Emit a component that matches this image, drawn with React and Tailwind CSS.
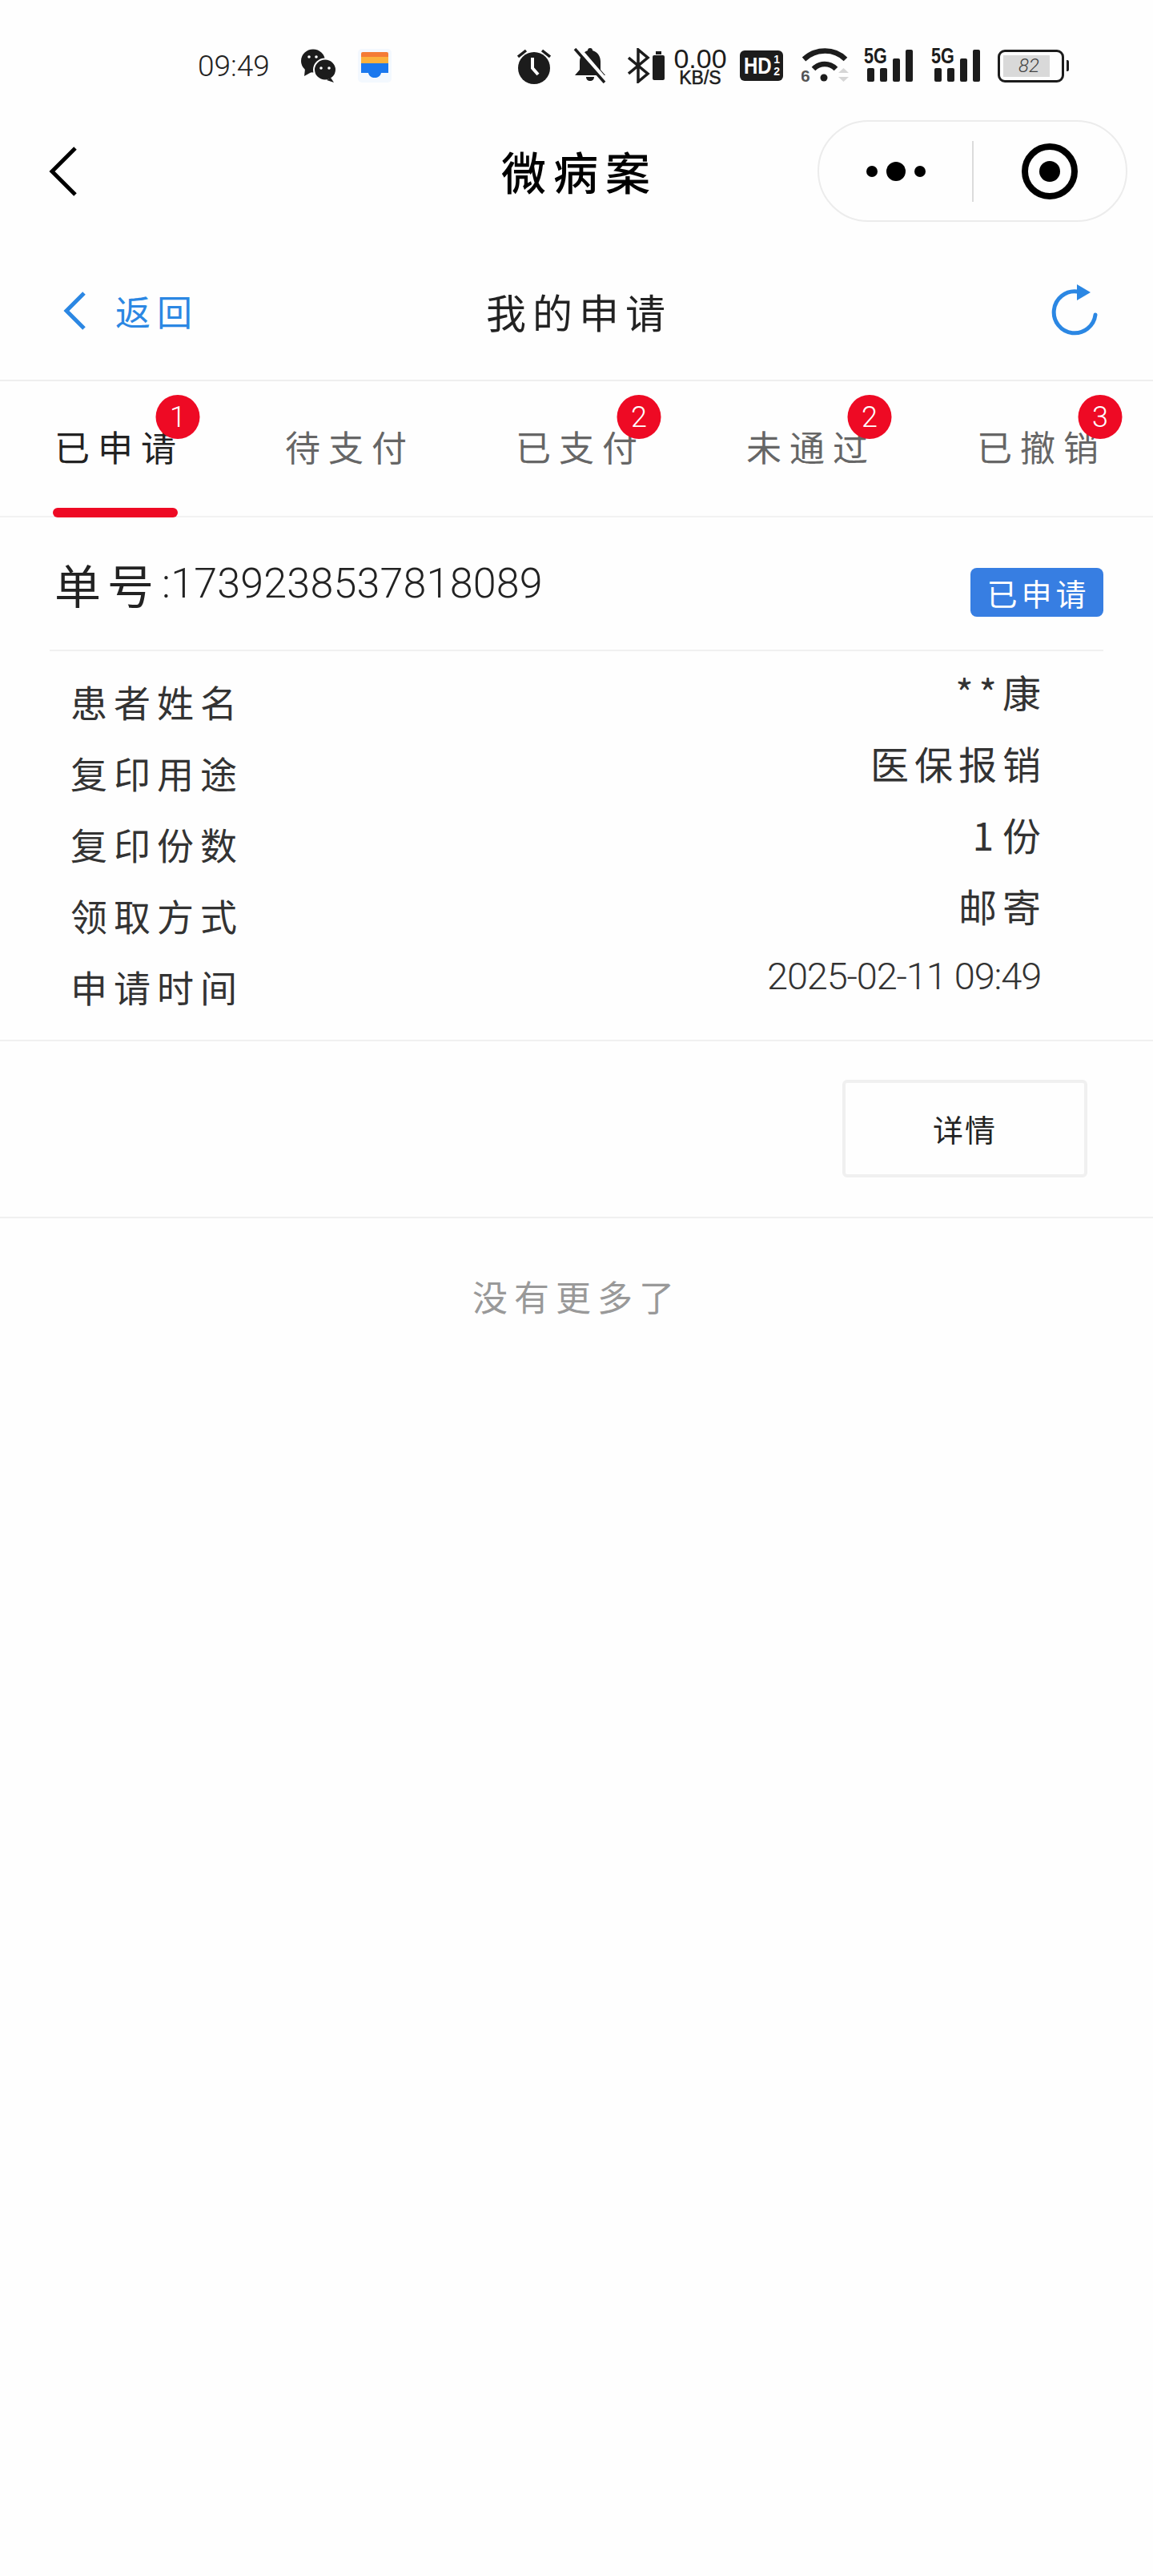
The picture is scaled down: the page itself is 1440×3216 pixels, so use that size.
import { Fragment } from "react";

const cjk = "font-['Noto_Sans_CJK_SC','Noto_Sans',sans-serif]";
const num = "font-['Roboto','Noto_Sans_CJK_SC',sans-serif] font-light";
const bold = "font-['Liberation_Sans',sans-serif] font-bold";

const tabs = [
  { label: "已申请", count: 1, active: true },
  { label: "待支付" },
  { label: "已支付", count: 2 },
  { label: "未通过", count: 2 },
  { label: "已撤销", count: 3 },
];

const rows = [
  ["患者姓名", "**康"],
  ["复印用途", "医保报销"],
  ["复印份数", "1 份"],
  ["领取方式", "邮寄"],
  ["申请时间", "2025-02-11 09:49"],
];

const Wechat = () => (
  <svg width="46" height="42" viewBox="0 0 46 42" fill="#1c1c1c">
    <ellipse cx="16" cy="15" rx="15" ry="14.5" />
    <path d="M6 25l-1 9 9-5z" />
    <ellipse cx="31" cy="26" rx="14" ry="13.5" stroke="#fff" strokeWidth="2" />
    <path d="M38 36l4 6-9-3z" />
    <circle cx="11" cy="10" r="1.8" fill="#fff" />
    <circle cx="20" cy="10" r="1.8" fill="#fff" />
    <circle cx="26" cy="24" r="1.8" fill="#fff" />
    <circle cx="36" cy="24" r="1.8" fill="#fff" />
  </svg>
);

const Wallet = () => (
  <svg width="42" height="42" viewBox="0 0 42 42">
    <rect x="0" y="0" width="42" height="42" rx="5" fill="#f3f8fe" />
    <path d="M4 6a2 2 0 0 1 2-2h30a2 2 0 0 1 2 2v4H4z" fill="#f47b35" />
    <rect x="4" y="10" width="34" height="8" fill="#fbb13c" />
    <path d="M4 18h34v12h-9c-1 4-4 6-8 6s-7-2-8-6H4z" fill="#1a78ee" />
  </svg>
);

const Alarm = () => (
  <svg width="42" height="46" viewBox="0 0 42 46" fill="#1c1c1c">
    <circle cx="21" cy="26" r="20" />
    <path d="M1 12l10-8M41 12L31 4" stroke="#1c1c1c" strokeWidth="3.5" fill="none" />
    <path d="M19 13v13l7 8" stroke="#fff" strokeWidth="4" fill="none" />
  </svg>
);

const BellOff = () => (
  <svg width="42" height="44" viewBox="0 0 42 44" fill="#1c1c1c">
    <path d="M21 0c2 0 3 1 3 3 7 2 10 8 10 14v10l6 7H2l6-7V17C8 11 12 5 18 3c0-2 1-3 3-3z" />
    <path d="M16 36h10c0 3-2 5-5 5s-5-2-5-5z" />
    <path d="M5 0l37 43" stroke="#fff" strokeWidth="7" />
    <path d="M2 1l37 42" stroke="#1c1c1c" strokeWidth="3.5" />
  </svg>
);

const BluetoothBattery = () => (
  <svg width="46" height="44" viewBox="0 0 46 44" fill="none">
    <path d="M1 12l24 20-12 10V2l12 10L1 32" stroke="#1c1c1c" strokeWidth="3.5" />
    <rect x="31" y="9" width="15" height="31" rx="2" fill="#1c1c1c" />
    <rect x="35" y="4" width="7" height="4" fill="#1c1c1c" />
  </svg>
);

const HdBadge = () => (
  <div className={`relative h-[38px] w-[54px] rounded-[6px] bg-[#1c1c1c] text-white ${bold}`}>
    <span className="absolute top-[4px] left-[5px] origin-left scale-x-[0.8] text-[30px] leading-none">HD</span>
    <div className="absolute top-[4px] right-[4px] flex flex-col text-[14px] leading-[15px]">
      <span>1</span>
      <span>2</span>
    </div>
  </div>
);

const Wifi = () => (
  <svg width="60" height="46" viewBox="0 0 60 46" fill="none">
    <path d="M3 15c15-14 38-14 52 0" stroke="#1c1c1c" strokeWidth="6.500" />
    <path d="M15 27c8-8 20-8 28 0" stroke="#1c1c1c" strokeWidth="6.500" />
    <circle cx="28" cy="38" r="4.500" fill="#1c1c1c" />
    <path d="M46 32h13l-6.500-6zM46 37h13l-6.500 6z" fill="#d6d6d6" />
    <text x="-1" y="43" fontSize="21" fontWeight="700" fill="#555" fontFamily="Liberation Sans">6</text>
  </svg>
);

const Signal = () => (
  <div className="relative h-[44px] w-[61px]">
    <span className={`absolute top-[-3px] left-0 origin-left scale-x-[0.8] text-[27px] leading-none text-[#1c1c1c] ${bold}`}>5G</span>
    <div className="absolute right-0 bottom-[2px] flex items-end gap-[7px]">
      <div className="h-[17px] w-[9px] rounded-[2px] bg-[#1c1c1c]" />
      <div className="h-[17px] w-[9px] rounded-[2px] bg-[#1c1c1c]" />
      <div className="h-[29px] w-[9px] rounded-[2px] bg-[#1c1c1c]" />
      <div className="h-[40px] w-[9px] rounded-[2px] bg-[#1c1c1c]" />
    </div>
  </div>
);

const Battery = () => (
  <div className="flex items-center gap-[3px]">
    <div className="flex h-[41px] w-[83px] items-center rounded-[9px] border-[3px] border-[#1c1c1c] px-[4px]">
      <div className={`flex h-[27px] w-[58px] items-center justify-center bg-[#d9d9d9] pl-[6px] text-[24px] leading-none text-[#444] italic ${num}`}>82</div>
    </div>
    <div className="h-[14px] w-[3px] rounded-r-[2px] bg-[#1c1c1c]" />
  </div>
);

const StatusBar = () => (
  <div className="flex h-[150px] items-center pt-[14px] pl-[247px]">
    <span className={`mr-[41px] w-[87px] text-[37px] leading-none text-[#222] ${num}`}>09:49</span>
    <div className="mr-[26px]"><Wechat /></div>
    <div className="mr-[157px]"><Wallet /></div>
    <div className="mr-[28px]"><Alarm /></div>
    <div className="mr-[26px]"><BellOff /></div>
    <div className="mr-[11px]"><BluetoothBattery /></div>
    <div className="mr-[16px] flex w-[67px] flex-col items-center font-['Liberation_Sans',sans-serif] leading-none text-[#1c1c1c]">
      <span className="text-[34px] leading-[29px]">0.00</span>
      <span className="text-[23px] leading-[18px] [-webkit-text-stroke:0.5px_#1c1c1c]">KB/S</span>
    </div>
    <div className="mr-[23px]"><HdBadge /></div>
    <div className="mr-[18px]"><Wifi /></div>
    <div className="mr-[23px]"><Signal /></div>
    <div className="mr-[22px]"><Signal /></div>
    <Battery />
  </div>
);

const NavBar = () => (
  <div className="relative flex h-[127px] items-center justify-between pr-[32px] pl-[60px]">
    <svg width="38" height="62" viewBox="0 0 38 62" fill="none">
      <path d="M34 2L5 31l29 29" stroke="#000" strokeWidth="5" />
    </svg>
    <span className={`absolute left-[626px] mt-[-2px] text-[56px] leading-none font-medium tracking-[9px] text-black ${cjk}`}>微病案</span>
    <div className="flex h-[127px] w-[387px] items-center rounded-[64px] border-[2px] border-[#ececec]">
      <div className="flex flex-1 items-center justify-center gap-[11px]">
        <div className="h-[14px] w-[14px] rounded-full bg-black" />
        <div className="h-[24px] w-[24px] rounded-full bg-black" />
        <div className="h-[14px] w-[14px] rounded-full bg-black" />
      </div>
      <div className="h-[76px] w-[2px] bg-[#dcdcdc]" />
      <div className="flex w-[190px] items-center justify-center">
        <div className="flex h-[70px] w-[70px] items-center justify-center rounded-full border-[8px] border-black">
          <div className="h-[26px] w-[26px] rounded-full bg-black" />
        </div>
      </div>
    </div>
  </div>
);

const PageHeader = () => (
  <div className="relative flex h-[199px] items-center justify-between border-b-[2px] border-[#efefef] pt-[24px] pr-[67px] pl-[78px]">
    <div className="flex items-center gap-[36px] text-[#2b87e3]">
      <svg width="30" height="50" viewBox="0 0 30 50" fill="none">
        <path d="M27 3L5 25l22 22" stroke="#2b87e3" strokeWidth="5" />
      </svg>
      <span className={`text-[44px] leading-none tracking-[8px] ${cjk}`}>返回</span>
    </div>
    <span className={`absolute left-[607px] text-[50px] leading-none tracking-[8px] text-[#222] ${cjk}`}>我的申请</span>
    <svg className="mt-[-2px]" width="60" height="66" viewBox="0 0 60 66" fill="none">
      <path d="M55 39A26 26 0 1 1 32 10" stroke="#2b87e3" strokeWidth="5" strokeLinecap="round" />
      <path d="M32 1l17 10-17 10z" fill="#2b87e3" />
    </svg>
  </div>
);

const Tabs = () => (
  <div className="grid h-[170px] grid-cols-5 border-b-[2px] border-[#f2f2f2]">
    {tabs.map((tab) => (
      <div key={tab.label} className="relative flex items-center justify-center pb-[6px]">
        <span className={`mr-[-10px] text-[44px] leading-none tracking-[10px] ${tab.active ? "text-[#222]" : "text-[#666]"} ${cjk}`}>{tab.label}</span>
        {tab.count && (
          <span className={`absolute top-[17px] left-[222px] flex h-[55px] w-[55px] -translate-x-1/2 items-center justify-center rounded-full bg-[#ee0a24] text-[36px] leading-none text-white ${num}`}>
            {tab.count}
          </span>
        )}
        {tab.active && <div className="absolute bottom-[-2px] left-[66px] h-[12px] w-[156px] rounded-[6px] bg-[#ee0a24]" />}
      </div>
    ))}
  </div>
);

const OrderCard = () => (
  <Fragment>
    <div className="mx-[62px] flex h-[167px] items-center justify-between border-b-[2px] border-[#f0f0f0] pt-[22px] pl-[6px]">
      <div className="mt-[-22px] flex items-center text-[#222]">
        <span className={`text-[58px] leading-none tracking-[8px] ${cjk}`}>单号</span>
        <span className={`ml-[2px] text-[52px] leading-none tracking-[0.2px] ${num}`}>:1739238537818089</span>
      </div>
      <span className={`flex h-[61px] w-[166px] items-center justify-center rounded-[8px] bg-[#377ee2] pl-[4px] text-[38px] leading-none tracking-[5px] text-white ${cjk}`}>已申请</span>
    </div>
    <div className="flex h-[487px] flex-col border-b-[2px] border-[#f0f0f0] pt-[20px] pr-[140px] pl-[88px]">
      {rows.map(([label, value]) => (
        <div key={label} className="flex h-[89px] items-start justify-between text-[#333]">
          <span className={`mt-[14px] text-[46px] leading-[56px] tracking-[8px] ${cjk}`}>{label}</span>
          {label === "申请时间" ? (
            <span className={`mt-[2px] text-[47px] leading-[56px] tracking-[-1.200px] ${num}`}>{value}</span>
          ) : (
            <span className={`mt-[2px] mr-[-7px] text-[48px] leading-[56px] tracking-[7px] [word-spacing:-14px] ${cjk}`}>{value}</span>
          )}
        </div>
      ))}
    </div>
    <div className="flex h-[221px] items-center justify-end border-b-[2px] border-[#f0f0f0] pr-[82px] pb-[2px]">
      <button className={`h-[122px] w-[306px] rounded-[6px] border-[4px] border-[#f0f0f0] text-[38px] leading-none tracking-[2px] text-[#222] ${cjk}`}>详情</button>
    </div>
  </Fragment>
);

const App = () => {
  return (
    <div className="min-h-[3216px] w-[1440px] bg-[#fefefe]">
      <StatusBar />
      <NavBar />
      <PageHeader />
      <Tabs />
      <OrderCard />
      <div className={`pt-[69px] text-center text-[44px] leading-[56px] tracking-[8px] text-[#999] ${cjk}`}>没有更多了</div>
    </div>
  );
};

export default App;
